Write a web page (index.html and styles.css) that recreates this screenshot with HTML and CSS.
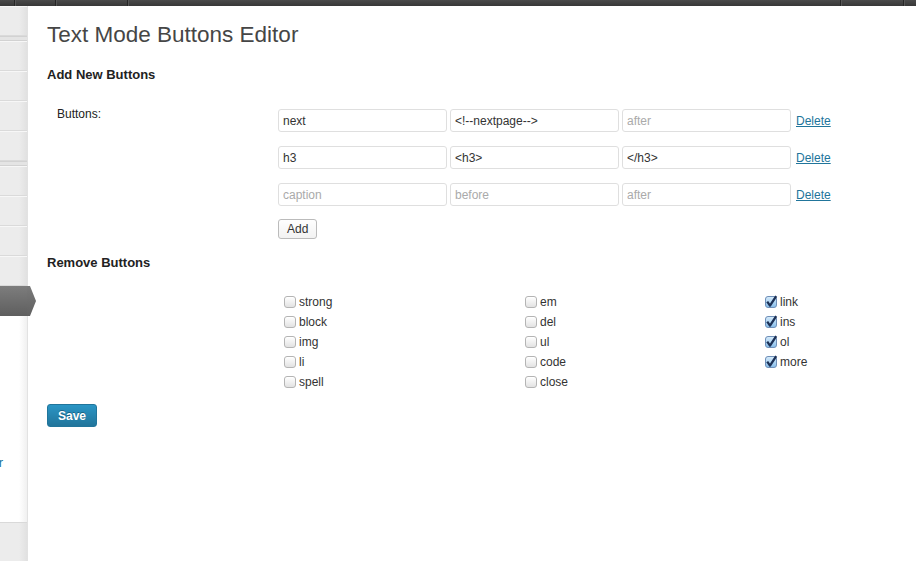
FILE: index.html
```html
<!DOCTYPE html>
<html lang="en">
<head>
<meta charset="utf-8">
<title>Text Mode Buttons Editor</title>
<link rel="stylesheet" href="styles.css">
</head>
<body>
<div class="adminbar">
  <div class="ab-item ab-1"></div>
  <div class="ab-item ab-2"></div>
  <div class="ab-item ab-3"></div>
  <div class="ab-item ab-spacer"></div>
  <div class="ab-item ab-4"></div>
  <div class="ab-last"></div>
</div>
<div class="layout">
  <nav class="menu">
    <div class="mi mi-first"></div>
    <div class="msep"></div>
    <div class="mi"></div>
    <div class="mi"></div>
    <div class="mi"></div>
    <div class="mi"></div>
    <div class="msep"></div>
    <div class="mi"></div>
    <div class="mi"></div>
    <div class="mi"></div>
    <div class="mi"></div>
    <div class="mi current"><span class="arrow"></span></div>
    <div class="submenu">
      <div class="sublink"><a href="#">Editor</a></div>
    </div>
    <div class="menu-foot"></div>
  </nav>
  <main class="content">
    <h2 class="title">Text Mode Buttons Editor</h2>
    <h3 class="section">Add New Buttons</h3>
    <div class="form-row">
      <div class="th">Buttons:</div>
      <div class="td">
        <div class="btn-row">
          <input class="field" type="text" value="next">
          <input class="field" type="text" value="&lt;!--nextpage--&gt;">
          <input class="field" type="text" placeholder="after">
          <a class="delete" href="#">Delete</a>
        </div>
        <div class="btn-row">
          <input class="field" type="text" value="h3">
          <input class="field" type="text" value="&lt;h3&gt;">
          <input class="field" type="text" value="&lt;/h3&gt;">
          <a class="delete" href="#">Delete</a>
        </div>
        <div class="btn-row">
          <input class="field" type="text" placeholder="caption">
          <input class="field" type="text" placeholder="before">
          <input class="field" type="text" placeholder="after">
          <a class="delete" href="#">Delete</a>
        </div>
        <button class="button" type="button">Add</button>
      </div>
    </div>
    <h3 class="section section-remove">Remove Buttons</h3>
    <div class="checks">
      <label class="check"><span class="box"></span>strong</label>
      <label class="check"><span class="box"></span>em</label>
      <label class="check"><svg class="box-on" width="12" height="12" viewBox="0 0 12 12"><use href="#cb"/></svg>link</label>
      <label class="check"><span class="box"></span>block</label>
      <label class="check"><span class="box"></span>del</label>
      <label class="check"><svg class="box-on" width="12" height="12" viewBox="0 0 12 12"><use href="#cb"/></svg>ins</label>
      <label class="check"><span class="box"></span>img</label>
      <label class="check"><span class="box"></span>ul</label>
      <label class="check"><svg class="box-on" width="12" height="12" viewBox="0 0 12 12"><use href="#cb"/></svg>ol</label>
      <label class="check"><span class="box"></span>li</label>
      <label class="check"><span class="box"></span>code</label>
      <label class="check"><svg class="box-on" width="12" height="12" viewBox="0 0 12 12"><use href="#cb"/></svg>more</label>
      <label class="check"><span class="box"></span>spell</label>
      <label class="check"><span class="box"></span>close</label>
    </div>
    <button class="button-primary" type="button">Save</button>
  </main>
</div>
<svg class="defs" width="0" height="0">
  <defs>
    <linearGradient id="cbg" x1="0" y1="0" x2="0" y2="1">
      <stop offset="0" stop-color="#d8ecfb"/>
      <stop offset="1" stop-color="#86bdea"/>
    </linearGradient>
    <g id="cb">
      <rect x="0.5" y="0.5" width="11" height="11" rx="2.5" fill="url(#cbg)" stroke="#6f8fb8"/>
      <path d="M2.2 5.6 L5 9.6 L11.2 0.2" fill="none" stroke="#1c3156" stroke-width="2.3" stroke-linejoin="round"/>
    </g>
  </defs>
</svg>
</body>
</html>
```
FILE: styles.css
```css
* { box-sizing: border-box; }
html, body { margin: 0; padding: 0; }
body {
  font-family: "Liberation Sans", Arial, sans-serif;
  font-size: 12px;
  color: #333;
  background: #fff;
  overflow: hidden;
}

.adminbar {
  display: flex;
  height: 6px;
  background: linear-gradient(#4a4a4a, #373737);
}
.ab-item {
  box-sizing: content-box;
  height: 6px;
  border-right: 1px solid #262626;
  box-shadow: 1px 0 0 #555;
}
.ab-1 { width: 14px; }
.ab-2 { width: 40px; }
.ab-3 { width: 71px; }
.ab-spacer { flex: 1; }
.ab-4 { width: 62px; }
.ab-last { width: 12px; }

.layout {
  display: flex;
  height: 555px;
}

.menu {
  width: 28px;
  flex: none;
  display: flex;
  flex-direction: column;
  position: relative;
  z-index: 2;
  border-right: 1px solid #e2e2e2;
}
.mi {
  height: 30px;
  border-top: 1px solid #f7f7f7;
  border-bottom: 1px solid #dadada;
  background: linear-gradient(to right, #ececec 0, #ececec 19px, #e1e1e1 27px);
}
.msep {
  height: 5px;
  border-top: 1px solid #d2d2d2;
  border-bottom: 1px solid #d2d2d2;
  background: #e4e4e4;
}
.current {
  position: relative;
  height: 30px;
  border: 0;
  background: linear-gradient(#7d7d7d, #5e5e5e);
}
.arrow {
  position: absolute;
  top: 0;
  right: -9px;
  width: 9px;
  height: 30px;
  background: linear-gradient(#7a7a7a, #606060);
  clip-path: polygon(0 0, 3px 0, 100% 50%, 3px 100%, 0 100%);
}
.submenu {
  height: 206px;
  background: linear-gradient(to right, #fff 0, #fff 19px, #f0f0f0 27px);
  padding-top: 138px;
  overflow: hidden;
}
.sublink {
  display: flex;
  justify-content: flex-end;
  padding-right: 24px;
  white-space: nowrap;
  line-height: 18px;
  font-size: 13px;
}
.sublink a {
  color: #21759b;
  text-decoration: none;
}
.menu-foot {
  flex: 1;
  border-top: 1px solid #d9d9d9;
  background: linear-gradient(to right, #ececec 0, #ececec 19px, #e1e1e1 27px);
}

.content {
  flex: 1;
  padding-left: 19px;
}
.title {
  margin: 0;
  padding-top: 14px;
  font-size: 22.5px;
  line-height: 29px;
  font-weight: normal;
  color: #464646;
}
.section {
  margin: 18px 0 0;
  font-size: 13px;
  line-height: 16px;
  font-weight: bold;
  color: #222;
}
.form-row {
  display: flex;
  margin-top: 14px;
}
.th {
  width: 231px;
  flex: none;
  padding: 9px 0 0 10px;
  line-height: 16px;
  color: #222;
}
.td {
  padding-top: 12px;
  display: flex;
  flex-direction: column;
  align-items: flex-start;
}
.btn-row {
  display: flex;
  align-items: center;
  height: 23px;
  margin-bottom: 14px;
}
.btn-row:nth-child(3) { margin-bottom: 13px; }
.field {
  width: 169px;
  height: 23px;
  margin: 0 3px 0 0;
  padding: 0 4px;
  border: 1px solid #dfdfdf;
  border-radius: 3px;
  background: #fff;
  font-family: "Liberation Sans", Arial, sans-serif;
  font-size: 12px;
  color: #333;
  outline: none;
}
.field::placeholder { color: #aaa; }
.delete {
  margin-left: 2px;
  color: #21759b;
  text-decoration: underline;
  font-size: 12px;
}
.button {
  height: 20px;
  padding: 0 8px;
  border: 1px solid #bbb;
  border-radius: 3px;
  background: linear-gradient(#fefefe, #f2f2f2);
  font-family: "Liberation Sans", Arial, sans-serif;
  font-size: 12px;
  color: #333;
  line-height: 18px;
}
.section-remove { margin-top: 16px; }

.checks {
  display: grid;
  grid-template-columns: 241px 240px auto;
  grid-auto-rows: 20px;
  margin: 21px 0 0 237px;
}
.check {
  display: flex;
  align-items: center;
  gap: 3px;
  color: #333;
  font-size: 12px;
}
.box {
  width: 12px;
  height: 12px;
  border: 1px solid #b4b4b4;
  border-radius: 3px;
  background: linear-gradient(#ffffff, #e2e2e2);
  box-shadow: inset 0 1px 0 #fff;
}
.box-on {
  overflow: visible;
  flex: none;
}
.defs { position: absolute; }

.button-primary {
  margin-top: 12px;
  height: 23px;
  padding: 0 10px;
  border: 1px solid #21759b;
  border-radius: 3px;
  background: linear-gradient(#2a95c5, #21759b);
  color: #fff;
  font-family: "Liberation Sans", Arial, sans-serif;
  font-size: 12px;
  font-weight: bold;
  text-shadow: 0 -1px 0 rgba(0,0,0,.3);
}
```
